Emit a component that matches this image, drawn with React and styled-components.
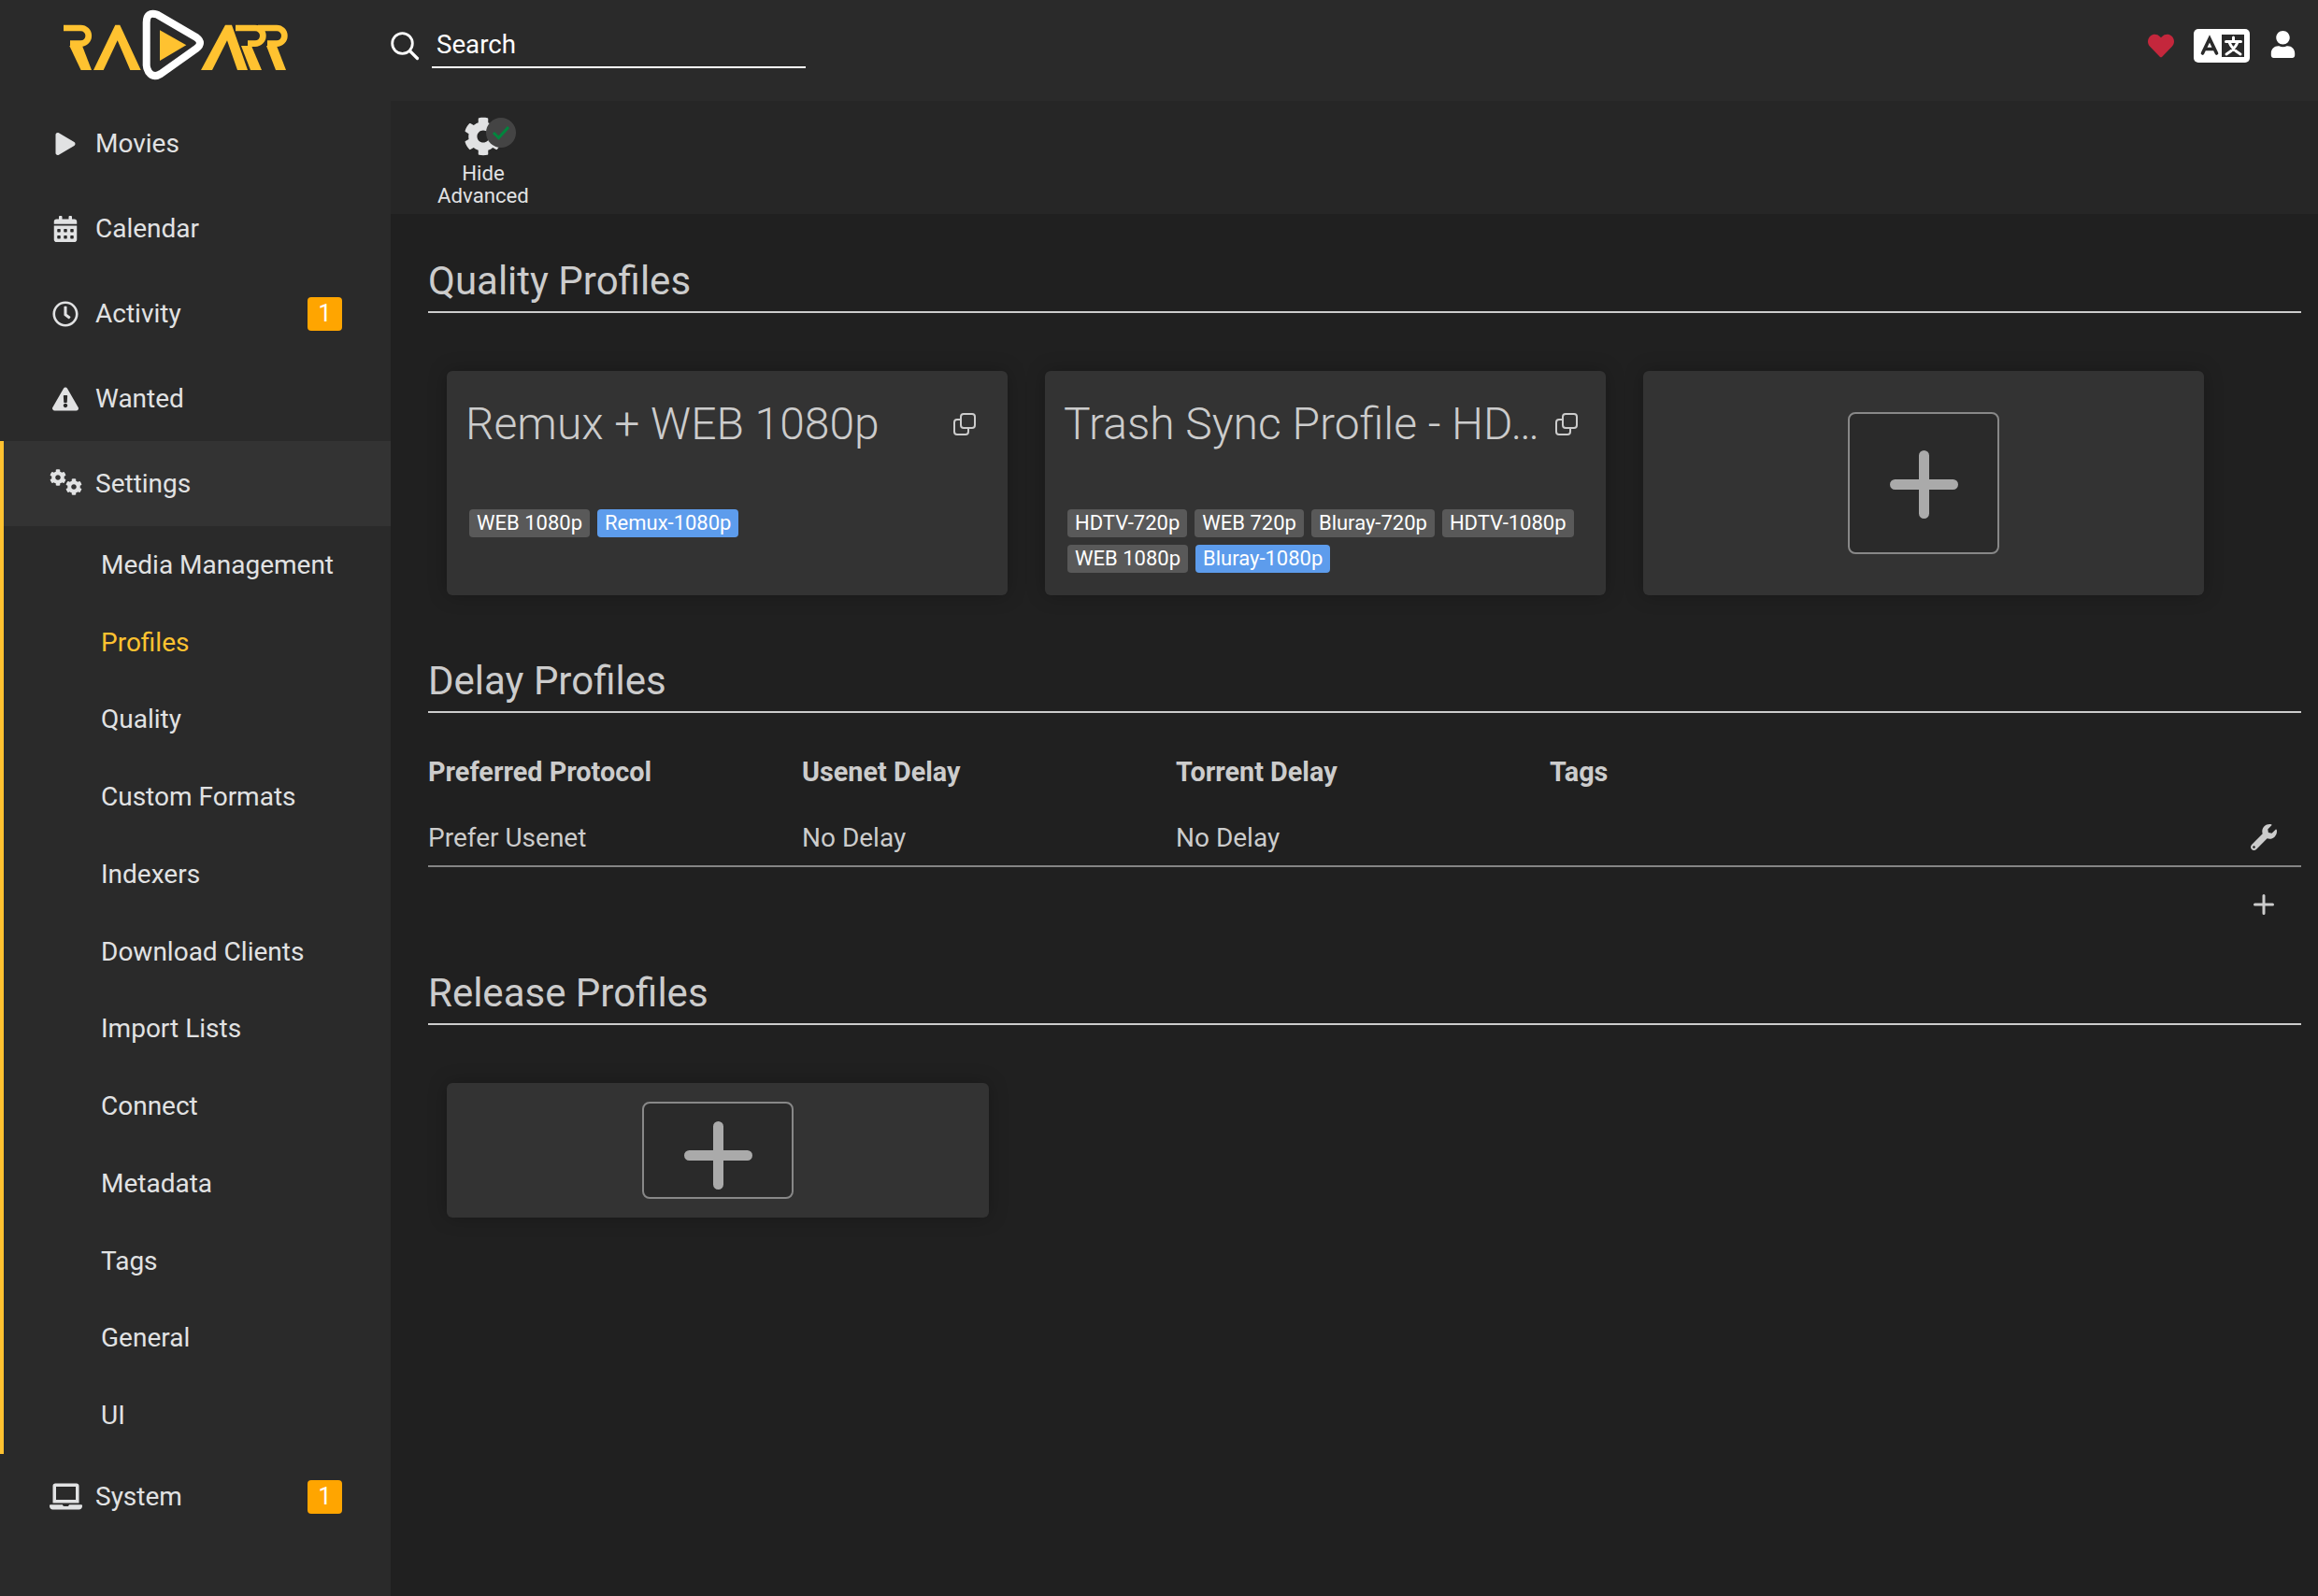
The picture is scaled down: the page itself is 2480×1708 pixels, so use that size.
import styled, { createGlobalStyle } from 'styled-components';
import {
  FaPlay,
  FaCalendarAlt,
  FaRegClock,
  FaExclamationTriangle,
  FaLaptop,
  FaCog,
  FaHeart,
  FaUser,
  FaWrench,
} from 'react-icons/fa';

const GlobalStyle = createGlobalStyle`
  html, body {
    margin: 0;
    padding: 0;
    background: #202020;
  }
  * {
    box-sizing: border-box;
  }
`;

const Page = styled.div`
  width: 2480px;
  height: 1708px;
  overflow: hidden;
  display: flex;
  flex-direction: column;
  font-family: Roboto, "Liberation Sans", sans-serif;
  color: #ccc;
  background: #202020;
`;

const Header = styled.header`
  flex: 0 0 108px;
  display: flex;
  align-items: center;
  padding-bottom: 10px;
  background: #2a2a2a;
`;

const LogoBox = styled.div`
  flex: 0 0 418px;
  align-self: flex-start;
  height: 98px;
  padding-left: 60px;
`;

const SearchBox = styled.div`
  display: flex;
  align-items: center;
  gap: 16px;
  margin-left: -1px;
  color: #fff;
`;

const SearchLabel = styled.div`
  width: 400px;
  height: 48px;
  margin-left: -3px;
  padding-left: 5px;
  border-bottom: 2px solid #fff;
  font-size: 27.7px;
  line-height: 46px;
  color: #fff;
`;

const HeaderIcons = styled.div`
  margin-left: auto;
  padding-right: 23px;
  display: flex;
  align-items: center;
  gap: 21px;
  color: #fff;
`;

const UserIcon = styled(FaUser)`
  margin-top: -3px;
`;

const Body = styled.div`
  flex: 1;
  display: flex;
  min-height: 0;
`;

const Sidebar = styled.nav`
  flex: 0 0 418px;
  background: #2a2a2a;
`;

const NavRow = styled.div`
  height: 91px;
  display: flex;
  align-items: center;
  padding: 0 52px 0 ${(p) => (p.$inGroup ? 46 : 50)}px;
  font-size: 28px;
  color: #e1e2e3;
  background: ${(p) => (p.$current ? '#333333' : 'transparent')};
`;

const NavIcon = styled.span`
  flex: 0 0 40px;
  height: 40px;
  margin-right: 12px;
  display: flex;
  align-items: center;
  justify-content: center;
`;

const GearPair = styled.span`
  display: flex;
  align-items: flex-start;
  height: 28px;
  margin-top: -4px;

  svg + svg {
    margin: 10px 0 0 -1px;
  }
`;

const Badge = styled.span`
  margin-left: auto;
  width: 37px;
  height: 36px;
  border-radius: 4px;
  background: #ffa500;
  color: #fff;
  font-size: 25px;
  line-height: 36px;
  text-align: center;
`;

const SettingsGroup = styled.div`
  border-left: 4px solid #ffc230;
`;

const SubRow = styled.div`
  height: 82.75px;
  display: flex;
  align-items: center;
  padding-left: 104px;
  font-size: 28px;
  color: ${(p) => (p.$active ? '#ffc230' : '#e1e2e3')};
`;

const Main = styled.main`
  flex: 1;
  min-width: 0;
  display: flex;
  flex-direction: column;
`;

const Toolbar = styled.div`
  flex: 0 0 121px;
  display: flex;
  padding-left: 40px;
  background: #262626;
`;

const ToolButton = styled.div`
  width: 118px;
  padding-top: 17px;
  display: flex;
  flex-direction: column;
  align-items: center;
  color: #e1e2e3;
  font-size: 22.2px;
  line-height: 24px;
  text-align: center;
`;

const ToolIcon = styled.div`
  position: relative;
  height: 42px;
  margin-bottom: 6px;
`;

const CheckDot = styled.span`
  position: absolute;
  left: 24px;
  top: 1px;
  width: 32px;
  height: 32px;
  border-radius: 50%;
  background: #444;
  display: flex;
  align-items: center;
  justify-content: center;
`;

const Content = styled.div`
  flex: 1;
  padding: 40px 18px 0 40px;
`;

const Section = styled.section`
  margin-bottom: ${(p) => p.$after}px;
`;

const Legend = styled.div`
  height: 66px;
  margin-bottom: 62px;
  border-bottom: 2px solid #ccc;
  font-size: 42px;
  line-height: 64px;
  color: #ccc;
`;

const CardRow = styled.div`
  display: flex;
  gap: 40px;
  padding-left: 20px;
`;

const Card = styled.div`
  width: ${(p) => p.$w}px;
  height: ${(p) => p.$h}px;
  border-radius: 6px;
  background: #333;
  box-shadow: 0 0 20px rgba(0, 0, 0, 0.25);
`;

const ProfileCard = styled(Card)`
  padding: 26px 24px 0 20px;
`;

const CenterCard = styled(Card)`
  display: flex;
  justify-content: ${(p) => (p.$center ? 'center' : 'flex-start')};
  align-items: center;
  padding-left: ${(p) => p.$left || 0}px;
`;

const TitleRow = styled.div`
  height: 62px;
  display: flex;
  align-items: center;
  justify-content: space-between;
`;

const Title = styled.div`
  min-width: 0;
  overflow: hidden;
  white-space: nowrap;
  text-overflow: ellipsis;
  font-size: 48px;
  font-weight: 300;
  line-height: 62px;
  color: #ccc;
`;

const CopyButton = styled.span`
  flex: 0 0 auto;
  display: flex;
  margin-right: ${(p) => p.$right}px;
  color: #ccc;
`;

const TagList = styled.div`
  margin-top: 60px;
  padding-left: 4px;
  display: flex;
  flex-wrap: wrap;
  gap: 8px;
`;

const Tag = styled.span`
  height: 30px;
  padding: 0 8px;
  border-radius: 4px;
  background: ${(p) => (p.$blue ? '#5d9cec' : '#595959')};
  color: #fff;
  font-size: 22px;
  line-height: 30px;
`;

const AddButton = styled.div`
  width: 162px;
  height: ${(p) => p.$h}px;
  padding-top: ${(p) => p.$drop}px;
  border: 2px solid #888;
  border-radius: 8px;
  background: #2a2a2a;
  display: flex;
  align-items: center;
  justify-content: center;
  color: #aaa;
`;

const DelayGrid = styled.div`
  display: grid;
  grid-template-columns: 400px 400px 400px 1fr;
  margin-top: -36px;
  font-size: 28px;
`;

const HeadCell = styled.div`
  height: 74px;
  line-height: 74px;
  font-size: 28.8px;
  font-weight: 700;
  color: #ccc;
`;

const Cell = styled.div`
  height: 65px;
  padding-top: 3px;
  border-bottom: 2px solid #858585;
  color: #ccc;
  display: flex;
  align-items: center;
  justify-content: space-between;
`;

const RowAction = styled.span`
  width: 80px;
  display: flex;
  justify-content: center;
  color: #ccc;
`;

const TableFooter = styled.div`
  height: 103px;
  padding-top: 29px;
  display: flex;
  justify-content: flex-end;
  color: #ccc;
`;

function RadarrLogo() {
  const yellow = '#ffc230';
  return (
    <svg width="260" height="100" viewBox="0 0 260 100">
      <path d="M8 30H26.4A8.3 8.3 0 0 1 26.4 46.7H15" fill="none" stroke={yellow} strokeWidth="6.7" />
      <polygon points="14.3,49 26.6,75 38,75 28,49" fill={yellow} />
      <polygon points="40,75 63.3,26.7 68.3,26.7 90.7,75 79.3,75 65.7,43.3 50.7,75" fill={yellow} />
      <path
        d="M96.7 24Q96.7 12 108 15.5L150 40Q158 46 150 52L112 79Q104 84 99 77Q96.7 73 96.7 70Z"
        fill="none"
        stroke="#fff"
        strokeWidth="8"
        strokeLinejoin="round"
      />
      <polygon points="111,32.3 139.3,48.3 111,65" fill={yellow} />
      <polygon
        points="155,75 181,26.7 188,26.7 205,75 194,75 183,43.3 167,75"
        fill={yellow}
        stroke="#2a2a2a"
        strokeWidth="2"
        paintOrder="stroke"
      />
      <path d="M192 30H213A8.3 8.3 0 0 1 213 46.7H205" fill="none" stroke={yellow} strokeWidth="6.7" />
      <polygon points="198,49 208,75 220,75 209,49" fill={yellow} />
      <path d="M216 30H236A8.3 8.3 0 0 1 236 46.7H226" fill="none" stroke={yellow} strokeWidth="6.7" />
      <polygon points="225,49 235,75 246,75 236,49" fill={yellow} />
    </svg>
  );
}

function SearchIcon() {
  return (
    <svg width="32" height="32" viewBox="0 0 32 32" fill="none" stroke="#fff" strokeWidth="2.8">
      <circle cx="13.5" cy="13.5" r="10.8" />
      <path d="M21.5 21.5L29.5 29.5" strokeLinecap="round" strokeWidth="3.2" />
    </svg>
  );
}

function LanguageIcon() {
  return (
    <svg width="60" height="36" viewBox="0 0 60 36">
      <rect width="60" height="36" rx="5" fill="#fff" />
      <path d="M9.5 26L17 10.5L24.5 26M12.5 21.5H21.5" fill="none" stroke="#2a2a2a" strokeWidth="3.6" strokeLinecap="round" />
      <rect x="30" y="6" width="24" height="24" fill="#2a2a2a" />
      <path
        d="M42.5 9V13M34.5 13.5H50.5M47 14C45 20 40 24 35 27M38 14C40 20 45 24 50 27"
        fill="none"
        stroke="#fff"
        strokeWidth="3"
        strokeLinecap="round"
      />
    </svg>
  );
}

function CopyIcon() {
  return (
    <svg width="24" height="24" viewBox="0 0 24 24" fill="none" stroke="currentColor" strokeWidth="2">
      <rect x="8" y="1" width="15" height="15" rx="3" />
      <path d="M8 7H4A3 3 0 0 0 1 10V20A3 3 0 0 0 4 23H13A3 3 0 0 0 16 20V16" />
    </svg>
  );
}

function PlusIcon({ size, weight }) {
  return (
    <svg width={size} height={size} viewBox={`0 0 ${size} ${size}`} stroke="currentColor" strokeWidth={weight} strokeLinecap="round">
      <path d={`M${size / 2} ${weight / 2}V${size - weight / 2}M${weight / 2} ${size / 2}H${size - weight / 2}`} />
    </svg>
  );
}

const subItems = [
  'Media Management',
  'Profiles',
  'Quality',
  'Custom Formats',
  'Indexers',
  'Download Clients',
  'Import Lists',
  'Connect',
  'Metadata',
  'Tags',
  'General',
  'UI',
];

function NavItem({ icon, label, badge, current, inGroup }) {
  return (
    <NavRow $current={current} $inGroup={inGroup}>
      <NavIcon>{icon}</NavIcon>
      {label}
      {badge && <Badge>{badge}</Badge>}
    </NavRow>
  );
}

function App() {
  return (
    <Page>
      <GlobalStyle />
      <Header>
        <LogoBox>
          <RadarrLogo />
        </LogoBox>
        <SearchBox>
          <SearchIcon />
          <SearchLabel>Search</SearchLabel>
        </SearchBox>
        <HeaderIcons>
          <FaHeart size={28} color="#c4273c" />
          <LanguageIcon />
          <UserIcon size={29} />
        </HeaderIcons>
      </Header>
      <Body>
        <Sidebar>
          <NavItem icon={<FaPlay size={24} />} label="Movies" />
          <NavItem icon={<FaCalendarAlt size={28} />} label="Calendar" />
          <NavItem icon={<FaRegClock size={28} />} label="Activity" badge="1" />
          <NavItem icon={<FaExclamationTriangle size={28} />} label="Wanted" />
          <SettingsGroup>
            <NavItem
              icon={
                <GearPair>
                  <FaCog size={18} />
                  <FaCog size={18} />
                </GearPair>
              }
              label="Settings"
              current
              inGroup
            />
            {subItems.map((item) => (
              <SubRow key={item} $active={item === 'Profiles'}>
                {item}
              </SubRow>
            ))}
          </SettingsGroup>
          <NavItem icon={<FaLaptop size={35} />} label="System" badge="1" />
        </Sidebar>
        <Main>
          <Toolbar>
            <ToolButton>
              <ToolIcon>
                <FaCog size={42} />
                <CheckDot>
                  <svg width="20" height="16" viewBox="0 0 20 16" fill="none" stroke="#00853d" strokeWidth="3">
                    <path d="M2 8L7.5 13.5L18 2" />
                  </svg>
                </CheckDot>
              </ToolIcon>
              Hide
              <br />
              Advanced
            </ToolButton>
          </Toolbar>
          <Content>
            <Section $after={60}>
              <Legend>Quality Profiles</Legend>
              <CardRow>
                <ProfileCard $w={600} $h={240}>
                  <TitleRow>
                    <Title>Remux + WEB 1080p</Title>
                    <CopyButton $right={10}>
                      <CopyIcon />
                    </CopyButton>
                  </TitleRow>
                  <TagList>
                    <Tag>WEB 1080p</Tag>
                    <Tag $blue>Remux-1080p</Tag>
                  </TagList>
                </ProfileCard>
                <ProfileCard $w={600} $h={240}>
                  <TitleRow>
                    <Title>Trash Sync Profile - HD…</Title>
                    <CopyButton $right={6}>
                      <CopyIcon />
                    </CopyButton>
                  </TitleRow>
                  <TagList>
                    <Tag>HDTV-720p</Tag>
                    <Tag>WEB 720p</Tag>
                    <Tag>Bluray-720p</Tag>
                    <Tag>HDTV-1080p</Tag>
                    <Tag>WEB 1080p</Tag>
                    <Tag $blue>Bluray-1080p</Tag>
                  </TagList>
                </ProfileCard>
                <CenterCard $w={600} $h={240} $center>
                  <AddButton $h={152} $drop={3}>
                    <PlusIcon size={73} weight={11} />
                  </AddButton>
                </CenterCard>
              </CardRow>
            </Section>
            <Section $after={0}>
              <Legend>Delay Profiles</Legend>
              <DelayGrid>
                <HeadCell>Preferred Protocol</HeadCell>
                <HeadCell>Usenet Delay</HeadCell>
                <HeadCell>Torrent Delay</HeadCell>
                <HeadCell>Tags</HeadCell>
                <Cell>Prefer Usenet</Cell>
                <Cell>No Delay</Cell>
                <Cell>No Delay</Cell>
                <Cell>
                  <span />
                  <RowAction>
                    <FaWrench size={28} />
                  </RowAction>
                </Cell>
              </DelayGrid>
              <TableFooter>
                <RowAction>
                  <PlusIcon size={22} weight={3} />
                </RowAction>
              </TableFooter>
            </Section>
            <Section $after={0}>
              <Legend>Release Profiles</Legend>
              <CardRow>
                <CenterCard $w={580} $h={144} $left={209}>
                  <AddButton $h={104} $drop={10}>
                    <PlusIcon size={73} weight={11} />
                  </AddButton>
                </CenterCard>
              </CardRow>
            </Section>
          </Content>
        </Main>
      </Body>
    </Page>
  );
}

export default App;
